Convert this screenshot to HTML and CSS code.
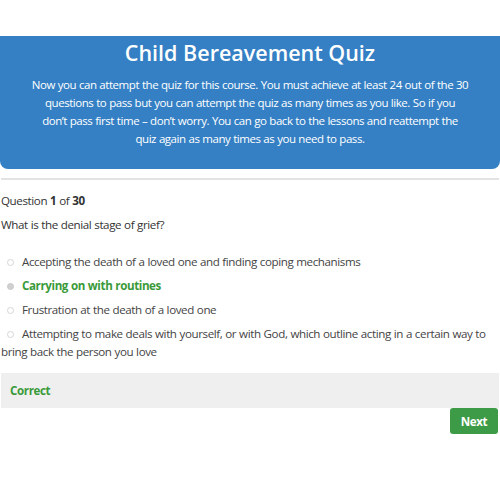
FILE: index.html
```html
<!DOCTYPE html>
<html>
<head>
<meta charset="utf-8">
<link rel="stylesheet" href="styles.css">
</head>
<body>
<div class="banner">
  <h1 class="title">Child Bereavement Quiz</h1>
  <p class="intro">Now you can attempt the quiz for this course. You must achieve at least 24 out of the 30<br> questions to pass but you can attempt the quiz as many times as you like. So if you<br> don’t pass first time – don’t worry. You can go back to the lessons and reattempt the<br> quiz again as many times as you need to pass.</p>
</div>
<div class="rule"></div>
<div class="quiz">
  <div class="counter">Question <b>1</b> of <b>30</b></div>
  <div class="question">What is the denial stage of grief?</div>
  <ul class="answers">
    <li class="answer"><span class="radio"></span>Accepting the death of a loved one and finding coping mechanisms</li>
    <li class="answer correct"><span class="radio checked"></span>Carrying on with routines</li>
    <li class="answer"><span class="radio"></span>Frustration at the death of a loved one</li>
    <li class="answer"><span class="radio"></span>Attempting to make deals with yourself, or with God, which outline acting in a certain way to bring back the person you love</li>
  </ul>
  <div class="feedback">Correct</div>
  <div class="actions"><button class="next">Next</button></div>
</div>
</body>
</html>
```
FILE: styles.css
```css
html, body {
  margin: 0;
  padding: 0;
  background: #fff;
}
body {
  font-family: "Open Sans", "Noto Sans", sans-serif;
  color: #444;
}
.banner {
  margin-top: 36px;
  background: #3580c4;
  color: #fff;
  border-radius: 0 0 8px 8px;
  padding: 2px 24px 21px;
  text-align: center;
}
.title {
  margin: 0;
  font-size: 21.5px;
  line-height: 30px;
  font-weight: 600;
}
.intro {
  margin: 8px 0 0;
  font-size: 11.5px;
  line-height: 18px;
  letter-spacing: -0.45px;
  word-spacing: 0.3px;
}
.rule {
  height: 2px;
  background: #e3e3e3;
  margin: 9px 1px 0;
}
.quiz {
  padding: 0 1px;
}
.counter, .question, .answer, .feedback, .next {
  font-size: 11.6px;
  letter-spacing: -0.4px;
  word-spacing: 0.3px;
}
.counter {
  margin-top: 12px;
  line-height: 18px;
  color: #333;
}
.counter b { font-weight: 700; }
.question {
  margin-top: 6px;
  line-height: 18px;
  color: #333;
}
.answers {
  list-style: none;
  margin: 19px 0 0;
  padding: 0;
}
.answer {
  line-height: 18px;
  padding-left: 6px;
  margin-bottom: 6px;
}
.answer:last-child { padding-left: 0; text-indent: 6px; }
.answer.correct {
  color: #3a9a3a;
  font-weight: 700;
}
.radio {
  display: inline-block;
  width: 7px;
  height: 7px;
  border: 1px solid #d6d6d6;
  border-radius: 50%;
  margin-right: 8px;
  vertical-align: 0;
  box-sizing: border-box;
}
.radio.checked {
  background: #d0d0d0;
  border-color: #c8c8c8;
}
.feedback {
  margin-top: 12px;
  background: #efefef;
  height: 35px;
  line-height: 35px;
  padding-left: 9px;
  font-weight: 700;
  color: #3a9a3a;
}
.actions {
  display: flex;
  justify-content: flex-end;
}
.next {
  background: #3d9b47;
  color: #fff;
  border: none;
  border-radius: 3px;
  font-family: "Open Sans", sans-serif;
  font-weight: 700;
  width: 48px;
  height: 26px;
  padding: 0;
  margin-right: 1px;
}
```
